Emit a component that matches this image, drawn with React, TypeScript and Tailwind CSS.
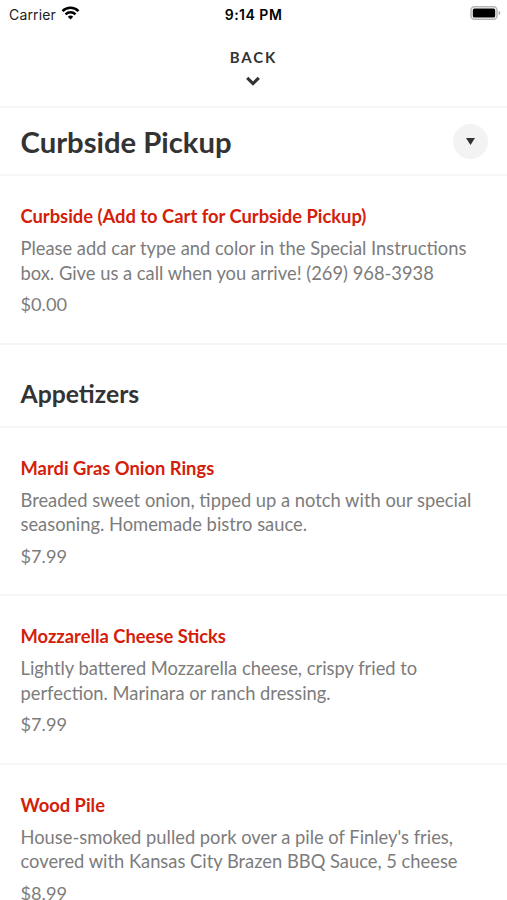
import React from "react";

type Item = { name: string; lines: string[]; price: string };

const appetizers: Item[] = [
  { name: "Mardi Gras Onion Rings", lines: ["Breaded sweet onion, tipped up a notch with our special", "seasoning. Homemade bistro sauce."], price: "$7.99" },
  { name: "Mozzarella Cheese Sticks", lines: ["Lightly battered Mozzarella cheese, crispy fried to", "perfection. Marinara or ranch dressing."], price: "$7.99" },
  { name: "Wood Pile", lines: ["House-smoked pulled pork over a pile of Finley's fries,", "covered with Kansas City Brazen BBQ Sauce, 5 cheese"], price: "$8.99" },
];

function MenuItem({ item }: { item: Item }) {
  return (
    <article className="h-[168.5px] shrink-0 border-b-2 border-[#f6f6f6] px-[20.5px] pt-[28px] last:h-auto last:border-b-0">
      <h3 className="text-[18.35px] leading-[25px] font-bold whitespace-nowrap text-[#d3200a]">{item.name}</h3>
      <p className="mt-[7px] text-[18.33px] leading-[24.5px] whitespace-nowrap text-[#7c7c7c]">
        {item.lines.map((l) => (
          <span key={l} className="block">{l}</span>
        ))}
      </p>
      <p className="mt-[7px] text-[18.2px] leading-[24px] text-[#7c7c7c]">{item.price}</p>
    </article>
  );
}

export default function App() {
  return (
    <main className="flex h-[900px] w-[507px] flex-col overflow-hidden bg-white font-['Lato',sans-serif]">
      <header className="grid h-[28px] shrink-0 grid-cols-3 items-center pr-[6px] pl-[9px] font-['Inter',sans-serif] text-[14px] text-black">
        <div className="flex items-center gap-[5px]">
          <span className="tracking-[0.15px] text-[#222]">Carrier</span>
          <svg className="-mt-[3px]" width="19" height="14" viewBox="0 0 18 14" fill="none" stroke="black" strokeWidth="2.5">
            <path d="M1 5.1a11.5 11.5 0 0 1 16 0M4 8.3a7.2 7.2 0 0 1 10 0" />
            <path d="M6.3 10.7a4 4 0 0 1 5.4 0L9 13.5z" fill="black" stroke="none" />
          </svg>
        </div>
        <span className="-ml-[3px] text-center font-semibold tracking-[0.5px] whitespace-nowrap">9:14 PM</span>
        <svg className="-mt-[2px] justify-self-end" width="31" height="16" viewBox="0 0 31 16">
          <rect x="1" y="1.7" width="26" height="12.6" rx="3.5" fill="none" stroke="#b5b5b5" strokeWidth="1.5" />
          <rect x="2.8" y="3.4" width="22.4" height="9.2" rx="1.6" />
          <path d="M28.7 5.8v4.4c2.2-.9 2.2-3.5 0-4.4" fill="#aaa" />
        </svg>
      </header>
      <nav className="flex h-[80px] shrink-0 flex-col items-center border-b-2 border-[#f6f6f6] pt-[19px] text-[#333]">
        <span className="text-[15px] leading-[20px] font-bold tracking-[1.9px]">BACK</span>
        <svg className="mt-[9px] -ml-px" width="14" height="10" viewBox="0 0 14 10" fill="none" stroke="#333" strokeWidth="3.1"><path d="m1.2 1.8 5.8 5.7 5.8-5.7" /></svg>
      </nav>
      <section className="flex h-[68px] shrink-0 items-center justify-between border-b-2 border-[#f6f6f6] pr-[19px] pl-[20.5px]">
        <h1 className="pt-[2px] text-[29.25px] font-bold text-[#333]">Curbside Pickup</h1>
        <button className="flex size-[35px] items-center justify-center rounded-full bg-[#f3f3f3]" aria-label="Choose category">
          <svg width="9" height="7" viewBox="0 0 9 7"><path d="M0 0h9L4.5 7z" fill="#333" /></svg>
        </button>
      </section>
      <MenuItem item={{ name: "Curbside (Add to Cart for Curbside Pickup)", lines: ["Please add car type and color in the Special Instructions", "box. Give us a call when you arrive! (269) 968-3938"], price: "$0.00" }} />
      <h2 className="h-[83px] shrink-0 border-b-2 border-[#f6f6f6] px-[20.5px] pt-[33px] text-[24.75px] leading-[32px] font-bold text-[#333]">Appetizers</h2>
      {appetizers.map((item) => <MenuItem key={item.name} item={item} />)}
    </main>
  );
}
